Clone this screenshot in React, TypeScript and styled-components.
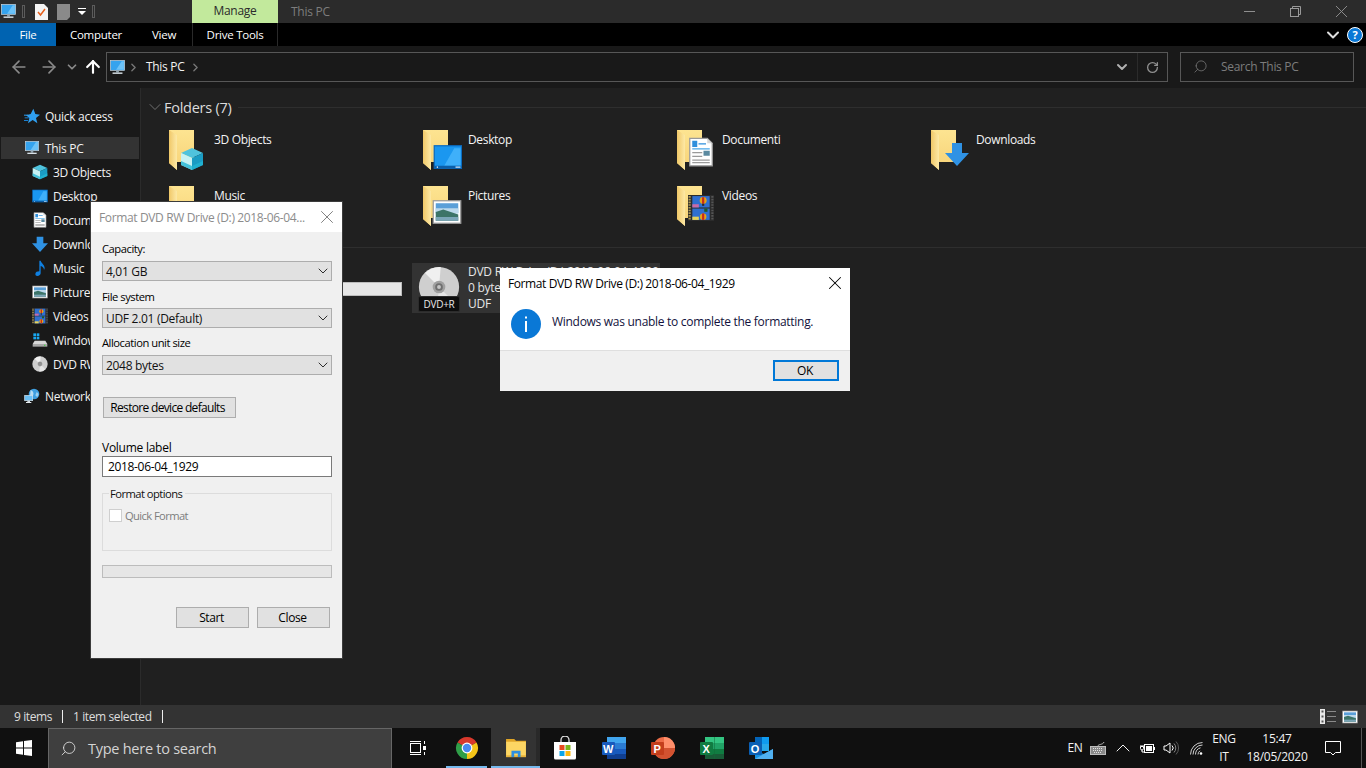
import React from "react";
import styled, { createGlobalStyle } from "styled-components";
import {
  ArrowLeft,
  ArrowRight,
  ArrowUp,
  ChevronDown,
  ChevronRight,
  ChevronUp,
  RotateCw,
  Search,
  X,
} from "lucide-react";

const GlobalStyle = createGlobalStyle`
  html, body {
    margin: 0;
    padding: 0;
    background: #202020;
    font-family: "Open Sans", "Noto Sans", sans-serif;
    font-size: 12px;
    letter-spacing: -0.26px;
  }
  * { box-sizing: border-box; }
`;

const Page = styled.div`
  position: relative;
  width: 1366px;
  height: 768px;
  overflow: hidden;
  display: flex;
  flex-direction: column;
  color: #fff;
`;

/* ---------- title bar ---------- */
const TitleBar = styled.div`
  height: 23px;
  background: #2b2b2b;
  display: flex;
  align-items: center;
`;
const QuickTools = styled.div`
  width: 192px;
  display: flex;
  align-items: center;
  height: 100%;
`;
const QuickSep = styled.span`
  width: 3px;
  height: 13px;
  border: 1px solid #5c5c5c;
  margin: 0 ${(p: { $m?: number }) => p.$m ?? 10}px;
`;
const ManageTab = styled.div`
  width: 86px;
  height: 100%;
  background: #c2e99c;
  color: #2b2b2b;
  text-align: center;
  line-height: 21px;
`;
const WindowTitle = styled.div`
  margin-left: 13px;
  color: #7d7d7d;
  flex: 1;
`;
const WindowButtons = styled.div`
  display: flex;
  align-items: center;
  height: 100%;
  padding-right: 2px;
`;
const WindowButton = styled.div`
  width: 46px;
  height: 100%;
  display: flex;
  align-items: center;
  justify-content: center;
  color: #8f8f8f;
`;

/* ---------- ribbon ---------- */
const Ribbon = styled.div`
  height: 23px;
  background: #000;
  display: flex;
  align-items: center;
`;
const RibbonTab = styled.div<{ $w: number; $active?: boolean; $ruled?: boolean }>`
  width: ${(p) => p.$w}px;
  height: 100%;
  display: flex;
  align-items: center;
  justify-content: center;
  font-size: 11.5px;
  background: ${(p) => (p.$active ? "#0063b1" : "transparent")};
  border-left: ${(p) => (p.$ruled ? "1px solid #2a2a2a" : "none")};
  border-right: ${(p) => (p.$ruled ? "1px solid #2a2a2a" : "none")};
`;
const RibbonEnd = styled.div`
  margin-left: auto;
  display: flex;
  align-items: center;
  gap: 4px;
  padding-right: 3px;
`;
const HelpBadge = styled.div`
  width: 16px;
  height: 16px;
  border-radius: 50%;
  border: 1px solid #fff;
  background: #0a78d6;
  color: #fff;
  font-weight: 700;
  font-size: 11px;
  line-height: 14px;
  text-align: center;
`;

/* ---------- address row ---------- */
const AddressRow = styled.div`
  height: 42px;
  background: #191919;
  display: flex;
  align-items: center;
`;
const NavButtons = styled.div`
  width: 106px;
  display: flex;
  align-items: center;
  padding-left: 9px;
  color: #8a8a8a;
`;
const NavSlot = styled.span<{ $w: number; $on?: boolean }>`
  width: ${(p) => p.$w}px;
  display: flex;
  justify-content: flex-start;
  color: ${(p) => (p.$on ? "#fff" : "#8a8a8a")};
`;
const AddressBox = styled.div`
  width: 1062px;
  height: 30px;
  border: 1px solid #575757;
  display: flex;
  align-items: center;
  padding-left: 2px;
  color: #f2f2f2;
`;
const Crumb = styled.span`
  margin: 0 4px 0 6px;
  padding-bottom: 2px;
  letter-spacing: -0.3px;
`;
const AddressEnd = styled.div`
  margin-left: auto;
  height: 100%;
  display: flex;
  align-items: center;
  color: #8f8f8f;
`;
const DropSlot = styled.div`
  width: 31px;
  height: 100%;
  display: flex;
  align-items: center;
  justify-content: center;
  border-right: 1px solid #2b2b2b;
  color: #b0b0b0;
`;
const RefreshSlot = styled.div`
  width: 29px;
  display: flex;
  justify-content: center;
`;
const SearchBox = styled.div`
  width: 174px;
  height: 30px;
  margin-left: 12px;
  border: 1px solid #575757;
  display: flex;
  align-items: center;
  padding: 0 0 2px 12px;
  gap: 13px;
  color: #7c7c7c;
  letter-spacing: -0.3px;
`;
const MirroredSearch = styled(Search)`
  transform: scaleX(-1);
`;

/* ---------- body ---------- */
const Body = styled.div`
  height: 617px;
  display: flex;
`;
const Sidebar = styled.nav`
  width: 141px;
  background: #191919;
  border-right: 1px solid #2b2b2b;
  padding-top: 16px;
  display: flex;
  flex-direction: column;
`;
const NavRow = styled.div<{ $child?: boolean; $selected?: boolean; $gap?: number }>`
  height: ${(p) => (p.$selected ? "22px" : "24px")};
  margin-top: ${(p) => p.$gap ?? 0}px;
  margin-bottom: ${(p) => (p.$selected ? "1px" : "0")};
  margin-left: 1px;
  margin-right: 1px;
  padding-left: ${(p) => (p.$child ? "31px" : "23px")};
  display: flex;
  align-items: center;
  gap: 5px;
  background: ${(p) => (p.$selected ? "#333" : "transparent")};
  color: #f2f2f2;
  white-space: nowrap;
  letter-spacing: -0.3px;
`;

const Main = styled.main`
  flex: 1;
  background: #202020;
  padding: 9px 0 0 4px;
`;
const SectionHead = styled.div<{ $top?: number }>`
  height: 20px;
  margin-top: ${(p) => p.$top ?? 0}px;
  display: flex;
  align-items: center;
  color: #cfcfcf;
  white-space: nowrap;
`;
const SectionTitle = styled.span`
  font-size: 14.5px;
  margin-left: -1px;
  color: #dcdcdc;
`;
const SectionRule = styled.span`
  flex: 1;
  height: 1px;
  margin-left: 7px;
  background: #2e2e2e;
`;
const TileGrid = styled.div<{ $top: number }>`
  display: grid;
  grid-template-columns: repeat(4, 248px);
  column-gap: 6px;
  row-gap: 8px;
  margin: ${(p) => p.$top}px 0 0 13px;
`;
const FolderTile = styled.div`
  height: 48px;
  display: flex;
  padding-left: 11px;
`;
const FolderLabel = styled.div`
  margin: 3px 0 0 6px;
  color: #f4f4f4;
  line-height: 16px;
  letter-spacing: -0.34px;
`;
const DriveTile = styled.div<{ $selected?: boolean }>`
  height: 50px;
  display: flex;
  padding-left: 6px;
  background: ${(p) => (p.$selected ? "#333" : "transparent")};
`;
const DriveText = styled.div`
  margin-left: 6px;
  width: 188px;
  line-height: 16px;
  padding-top: 1px;
  color: #e6e6e6;
  white-space: nowrap;
`;
const DriveBar = styled.div`
  height: 14px;
  margin: 2px 0;
  background: #e6e6e6;
  border: 1px solid #bcbcbc;
`;

/* ---------- status bar ---------- */
const StatusBar = styled.div`
  height: 23px;
  background: #333;
  display: flex;
  align-items: center;
  padding-left: 14px;
  color: #dedede;
  letter-spacing: -0.4px;
`;
const StatusSep = styled.span`
  width: 1px;
  height: 13px;
  background: #eee;
  margin: 0 10px;
`;
const ViewIcons = styled.div`
  margin-left: auto;
  display: flex;
  gap: 6px;
  padding-right: 8px;
`;

/* ---------- taskbar ---------- */
const Taskbar = styled.div`
  height: 40px;
  background: #101010;
  display: flex;
  align-items: center;
`;
const StartSlot = styled.div`
  width: 48px;
  display: flex;
  justify-content: center;
`;
const TaskSearch = styled.div`
  width: 344px;
  height: 40px;
  background: #3f3f3f;
  border: 1px solid #666;
  border-bottom: none;
  display: flex;
  align-items: center;
  padding-left: 11px;
  gap: 11px;
  color: #d4d4d4;
  font-size: 14.5px;
`;
const TaskIcon = styled.div<{ $w?: number; $open?: boolean; $active?: boolean }>`
  position: relative;
  width: ${(p) => p.$w ?? 49}px;
  height: 40px;
  display: flex;
  align-items: center;
  justify-content: center;
  background: ${(p) => (p.$active ? "#333" : "transparent")};
  border-right: ${(p) => (p.$active ? "4px solid #292929" : "none")};
  padding-left: ${(p) => (p.$active ? "4px" : "0")};
  &::after {
    content: "";
    display: ${(p) => (p.$open ? "block" : "none")};
    position: absolute;
    bottom: 0;
    left: ${(p) => (p.$active ? 0 : "4px")};
    right: ${(p) => (p.$active ? "-4px" : "4px")};
    height: 2px;
    background: #76b9ed;
  }
`;
const Tray = styled.div`
  margin-left: auto;
  display: flex;
  align-items: center;
  height: 100%;
`;
const TraySlot = styled.div<{ $w: number }>`
  width: ${(p) => p.$w}px;
  display: flex;
  flex-direction: column;
  align-items: center;
  justify-content: center;
  line-height: 18px;
  white-space: nowrap;
  color: #f2f2f2;
`;
const ShowDesktop = styled.div`
  width: 11px;
  height: 100%;
  padding-left: 6px;
  &::before {
    content: "";
    display: block;
    width: 1px;
    height: 100%;
    background: #555;
  }
`;

/* ---------- dialogs ---------- */
const FormatWindow = styled.section`
  position: absolute;
  left: 90px;
  top: 201px;
  width: 253px;
  height: 458px;
  background: #f0f0f0;
  border: 1px solid #3c3c3c;
  color: #000;
`;
const FormatTitle = styled.header`
  height: 30px;
  background: #fff;
  display: flex;
  align-items: center;
  justify-content: space-between;
  padding: 0 4px 0 8px;
  color: #8c8c8c;
  white-space: nowrap;
  letter-spacing: -0.36px;
`;
const FormatBody = styled.div`
  padding-left: 11px;
  width: 241px;
`;
const FieldLabel = styled.div<{ $top: number; $small?: boolean }>`
  height: 16px;
  line-height: 18px;
  margin-top: ${(p) => p.$top}px;
  font-size: ${(p) => (p.$small ? "11.2px" : "12px")};
  letter-spacing: ${(p) => (p.$small ? "-0.46px" : "-0.26px")};
`;
const Combo = styled.div<{ $top: number }>`
  height: 20px;
  margin-top: ${(p) => p.$top}px;
  background: #e1e1e1;
  border: 1px solid #adadad;
  display: flex;
  align-items: center;
  justify-content: space-between;
  padding-left: 3px;
  color: #111;
  letter-spacing: -0.3px;
`;
const PlainButton = styled.div<{ $w: number; $h?: number }>`
  width: ${(p) => p.$w}px;
  height: ${(p) => p.$h ?? 21}px;
  background: #e1e1e1;
  border: 1px solid #adadad;
  display: flex;
  align-items: center;
  justify-content: center;
  letter-spacing: -0.4px;
  padding-right: 2px;
`;
const RestoreButton = styled(PlainButton)`
  margin: 22px 0 0 1px;
  letter-spacing: -0.68px;
  padding-right: 4px;
`;
const VolumeInput = styled.div`
  height: 21px;
  margin-top: 1px;
  background: #fff;
  border: 1px solid #7a7a7a;
  display: flex;
  align-items: center;
  padding-left: 5px;
  letter-spacing: -0.34px;
`;
const OptionsGroup = styled.fieldset`
  margin: 8px 0 0;
  padding: 0 0 0 6px;
  height: 66px;
  border: 1px solid #dcdcdc;
`;
const OptionsLegend = styled.legend`
  padding: 0 3px 0 1px;
  margin-left: 0;
  line-height: 18px;
  height: 16px;
  color: #111;
  font-size: 11.2px;
  letter-spacing: -0.54px;
`;
const CheckRow = styled.div`
  margin-top: 7px;
  display: flex;
  align-items: center;
  gap: 3px;
  color: #7d7d7d;
  font-size: 11.2px;
  letter-spacing: -0.6px;
`;
const CheckBox = styled.span`
  width: 13px;
  height: 13px;
  background: #fff;
  border: 1px solid #cfcfcf;
`;
const Progress = styled.div`
  height: 13px;
  margin-top: 14px;
  background: #e6e6e6;
  border: 1px solid #bcbcbc;
`;
const FormatActions = styled.div`
  margin-top: 29px;
  padding-right: 2px;
  display: flex;
  justify-content: flex-end;
  gap: 8px;
`;
const AlertWindow = styled.section`
  position: absolute;
  left: 500px;
  top: 268px;
  width: 350px;
  height: 123px;
  background: #fff;
  color: #000;
  display: flex;
  flex-direction: column;
`;
const AlertTitle = styled.header`
  height: 30px;
  display: flex;
  align-items: center;
  justify-content: space-between;
  padding: 0 4px 0 8px;
  letter-spacing: -0.4px;
`;
const AlertBody = styled.div`
  flex: 1;
  display: flex;
  gap: 11px;
  padding: 11px 0 0 11px;
`;
const AlertText = styled.div`
  margin-top: 4px;
  color: #12123c;
  letter-spacing: -0.29px;
`;
const AlertFooter = styled.footer`
  height: 41px;
  background: #f0f0f0;
  border-top: 1px solid #dfdfdf;
  display: flex;
  justify-content: flex-end;
  padding: 9px 11px 0 0;
`;
const DefaultButton = styled(PlainButton)`
  border: 2px solid #0078d7;
`;

/* ---------- drawings, all in a 24x24 box ---------- */
const CubeArt = () => (
  <>
    <polygon points="12,1 23,6 12,11 1,6" fill="#4fc3dd" />
    <polygon points="1,6 12,11 12,23 1,18" fill="#c6f2f4" />
    <polygon points="23,6 12,11 12,23 23,18" fill="#1a9cc4" />
    <polygon points="1,14 12,19 23,14 23,18 12,23 1,18" fill="#22b5d3" opacity="0.8" />
  </>
);
const DesktopArt = () => (
  <>
    <rect x="1" y="3" width="22" height="18" fill="#1a97f0" stroke="#0b6cc0" />
    <polygon points="9,19 17,5 22,5 22,19" fill="#3fb0fa" />
    <rect x="1" y="19" width="22" height="2" fill="#0b5ea8" />
    <rect x="3" y="19.6" width="1" height="1" fill="#fff" />
    <rect x="18" y="19.6" width="4" height="1" fill="#cfe9ff" />
  </>
);
const DocArt = () => (
  <>
    <polygon points="3,1 17,1 21,5 21,23 3,23" fill="#fff" stroke="#9a9a9a" />
    <polygon points="17,1 21,5 17,5" fill="#d6d6d6" />
    <rect x="5" y="3" width="4" height="5" fill="#2f8fdc" />
    <rect x="10" y="5" width="6" height="1" fill="#2f8fdc" />
    <rect x="5" y="9" width="14" height="1" fill="#49a7e8" />
    <rect x="5" y="12" width="8" height="1" fill="#9a9a9a" />
    <rect x="14" y="11" width="5" height="4" fill="#5b8aa0" />
    <rect x="5" y="15" width="8" height="1" fill="#9a9a9a" />
    <rect x="5" y="18" width="14" height="1" fill="#9a9a9a" />
    <rect x="5" y="20" width="14" height="1" fill="#9a9a9a" />
  </>
);
const ArrowArt = () => (
  <polygon points="7,1 17,1 17,11 24,11 12,24 0,11 7,11" fill="#2f92e4" />
);
const NoteArt = () => (
  <path
    d="M11 1h2c1 4 6 6 6 11 0 1-.5 2-1 3 0-3-2-5-5-6v11c0 2-2 4-5 4-2 0-3-1-3-3 0-3 3-4 6-4z"
    fill="#0f7fe0"
  />
);
const PictureArt = () => (
  <>
    <rect x="1" y="3" width="22" height="18" fill="#fff" stroke="#9a9a9a" />
    <rect x="3" y="5" width="18" height="8" fill="#5a9fd8" />
    <rect x="3" y="9" width="18" height="4" fill="#bcd9ec" />
    <polygon points="3,12 9,10 15,12 21,14 21,19 3,19" fill="#3c7468" />
    <rect x="3" y="16" width="18" height="3" fill="#7ba6b8" />
  </>
);
const FilmArt = () => (
  <>
    <rect x="0" y="0" width="24" height="24" fill="#2b2b2b" />
    <path d="M1.500 1v22" stroke="#b09a55" strokeWidth="2" strokeDasharray="1.500 1" />
    <path d="M22.500 1v22" stroke="#555" strokeWidth="2" strokeDasharray="1.500 1" />
    <rect x="4" y="1" width="16" height="10.500" fill="#2f6fd0" />
    <rect x="4" y="12.500" width="16" height="10.500" fill="#2f6fd0" />
    <circle cx="14" cy="5" r="3.200" fill="#e6a316" />
    <rect x="13" y="2" width="2" height="6" fill="#c8281e" />
    <rect x="13" y="8" width="2" height="2" fill="#2a2a2a" />
    <circle cx="14" cy="20" r="3" fill="#e6a316" />
    <rect x="13" y="17" width="2" height="6" fill="#c8281e" />
    <rect x="15" y="12.500" width="3" height="3" fill="#1f5a24" />
    <rect x="4" y="8.500" width="6" height="3" fill="#c86aa8" />
    <rect x="4" y="20" width="6" height="3" fill="#e6d25a" />
  </>
);
const PcArt = () => (
  <>
    <rect x="2" y="2" width="20" height="14" fill="#35a3ee" stroke="#c9d4dc" />
    <polygon points="10,15 18,3 21,3 21,15" fill="#6cc2f7" />
    <rect x="10" y="16" width="4" height="3" fill="#8fa3b0" />
    <rect x="5" y="19" width="14" height="2" fill="#d9e2e8" />
  </>
);
const DriveArt = () => (
  <>
    <polygon points="4,13 20,13 23,18 1,18" fill="#d6d6d6" />
    <rect x="1" y="18" width="22" height="4" fill="#a8a8a8" />
    <rect x="18" y="19" width="2" height="2" fill="#4ccf4c" />
    <rect x="2" y="2" width="4" height="4" fill="#18a8f0" />
    <rect x="7" y="2" width="4" height="4" fill="#18a8f0" />
    <rect x="2" y="7" width="4" height="4" fill="#18a8f0" />
    <rect x="7" y="7" width="4" height="4" fill="#18a8f0" />
  </>
);
const DiscArt = () => (
  <>
    <circle cx="12" cy="12" r="11.500" fill="#cfcfcf" />
    <path d="M12 12 4 4a11.500 11.500 0 0 1 9-3.400z" fill="#f0f0f0" />
    <path d="M12 12l8 8a11.500 11.500 0 0 1-9 3.400z" fill="#e6e6e6" />
    <circle cx="12" cy="12" r="3.600" fill="#a0a0a0" />
    <circle cx="12" cy="12" r="2.200" fill="#6f6f6f" />
    <circle cx="12" cy="12" r="1.100" fill="#c6c6c6" />
  </>
);
const NetworkArt = () => (
  <>
    <circle cx="15" cy="9" r="8" fill="#3f9fe0" />
    <path d="M10 3c3 1 5 4 4 7s-3 3-5 2z" fill="#b8dcf2" />
    <path d="M19 6l3 3-2 5-3-3z" fill="#9ed0ee" />
    <rect x="1" y="11" width="12" height="8" fill="#6cc0f5" stroke="#d6e2ea" />
    <rect x="5" y="19" width="4" height="2" fill="#cfd8de" />
    <rect x="3" y="21" width="8" height="1.5" fill="#e8edf0" />
  </>
);
const StarArt = () => (
  <>
    <polygon points="14,1 17,9 24,10 18,15 20,23 13,18 6,23 8,15 3,11 10,9" fill="#2f9ff0" />
    <rect x="0" y="10" width="6" height="1.5" fill="#2f9ff0" />
    <rect x="1" y="14" width="6" height="1.5" fill="#1a7fd0" />
    <rect x="0" y="18" width="6" height="1.5" fill="#1a7fd0" />
  </>
);

const Art = ({ size, children }: { size: number; children: React.ReactNode }) => (
  <svg width={size} height={size} viewBox="0 0 24 24" style={{ flex: "none" }}>
    {children}
  </svg>
);

const FolderIcon = ({ children, box = 24, dx = 11, dy = 18 }: { children: React.ReactNode; box?: number; dx?: number; dy?: number }) => (
  <svg width="39" height="44" viewBox="0 0 39 44" style={{ flex: "none" }}>
    <defs>
      <linearGradient id="flap" x1="0" x2="1" y1="0" y2="0">
        <stop offset="0" stopColor="#f0c868" />
        <stop offset="1" stopColor="#fde9a6" />
      </linearGradient>
      <linearGradient id="back" x1="0" x2="0" y1="0" y2="1">
        <stop offset="0" stopColor="#fde491" />
        <stop offset="1" stopColor="#f7d277" />
      </linearGradient>
    </defs>
    <polygon points="0,1 25,1 25,33 8,33 8,41 0,34" fill="url(#back)" />
    <polygon points="0,1 8,6 8,41 0,34" fill="url(#flap)" />
    <svg x={dx} y={dy} width={box} height={box} viewBox="0 0 24 24">
      {children}
    </svg>
  </svg>
);

const WinLogo = () => (
  <svg width="16" height="16" viewBox="0 0 16 16">
    <polygon points="0,2.2 7,1.2 7,7.5 0,7.5" fill="#fff" />
    <polygon points="8,1 16,0 16,7.5 8,7.5" fill="#fff" />
    <polygon points="0,8.5 7,8.5 7,14.8 0,13.8" fill="#fff" />
    <polygon points="8,8.5 16,8.5 16,16 8,15" fill="#fff" />
  </svg>
);
const TaskViewIcon = () => (
  <svg width="17" height="16" viewBox="0 0 17 16" fill="none" stroke="#fff">
    <rect x="1.5" y="3.5" width="10" height="9" />
    <path d="M1 1.500h11M1 14.500h11M15.500 1v3M15.500 12v3" />
    <rect x="14" y="6" width="3" height="4" fill="#fff" stroke="none" />
  </svg>
);
const ChromeIcon = () => (
  <svg width="24" height="24" viewBox="0 0 24 24">
    <path d="M12 12 2.47 6.5A11 11 0 0 1 21.53 6.5Z" fill="#d8382c" />
    <path d="M12 12 21.53 6.5A11 11 0 0 1 12 23Z" fill="#f5c518" />
    <path d="M12 12 12 23A11 11 0 0 1 2.47 6.5Z" fill="#2f9e48" />
    <circle cx="12" cy="12" r="5.4" fill="#fff" />
    <circle cx="12" cy="12" r="4.2" fill="#4a8af0" />
  </svg>
);
const ExplorerIcon = () => (
  <svg width="22" height="19" viewBox="0 0 24 21">
    <path d="M1 0h9l2 2h11v2H1z" fill="#e0a526" />
    <rect x="1" y="3" width="22" height="17" fill="#fdd663" />
    <rect x="1" y="18" width="22" height="2" fill="#e6b23a" />
    <path d="M7 20v-7h10v7h-3v-4h-4v4z" fill="#2f8fe0" />
  </svg>
);
const StoreIcon = () => (
  <svg width="24" height="24" viewBox="0 0 24 24">
    <path d="M8 7V4a4 4 0 0 1 8 0v3" fill="none" stroke="#ddd" strokeWidth="1.3" />
    <path d="M1 6h22v16a1.5 1.5 0 0 1-1.5 1.5h-19A1.5 1.5 0 0 1 1 22z" fill="#fff" />
    <rect x="6.5" y="9" width="5" height="5" fill="#e8491d" />
    <rect x="12.5" y="9" width="5" height="5" fill="#7cb518" />
    <rect x="6.5" y="15" width="5" height="5" fill="#0aa4e8" />
    <rect x="12.5" y="15" width="5" height="5" fill="#fbb80f" />
  </svg>
);
const OfficeLetter = ({ letter, fill, x = 6 }: { letter: string; fill: string; x?: number }) => (
  <>
    <rect x="0" y="6" width="13" height="13" rx="1" fill={fill} />
    <text x={x} y="16.5" textAnchor="middle" fontFamily="Liberation Sans" fontWeight="700" fontSize="11" fill="#fff">
      {letter}
    </text>
  </>
);
const WordIcon = () => (
  <svg width="24" height="24" viewBox="0 0 24 24">
    <rect x="5" y="1" width="19" height="6" fill="#41a5ee" />
    <rect x="5" y="7" width="19" height="6" fill="#2b7cd3" />
    <rect x="5" y="13" width="19" height="5" fill="#185abd" />
    <rect x="5" y="18" width="19" height="5" fill="#103f91" />
    <OfficeLetter letter="W" fill="#185abd" />
  </svg>
);
const PowerPointIcon = () => (
  <svg width="24" height="24" viewBox="0 0 24 24">
    <circle cx="13" cy="12" r="11" fill="#ed6c47" />
    <path d="M13 1a11 11 0 0 1 11 11H13z" fill="#ff8f6b" />
    <path d="M2 12a11 11 0 0 0 22 0z" fill="#d35230" />
    <OfficeLetter letter="P" fill="#c43e1c" />
  </svg>
);
const ExcelIcon = () => (
  <svg width="24" height="24" viewBox="0 0 24 24">
    <rect x="5" y="1" width="19" height="6" fill="#33c481" />
    <rect x="5" y="7" width="19" height="6" fill="#21a366" />
    <rect x="5" y="13" width="19" height="5" fill="#107c41" />
    <rect x="5" y="18" width="19" height="5" fill="#185c37" />
    <rect x="14" y="1" width="1" height="22" fill="#0f6b38" opacity="0.5" />
    <OfficeLetter letter="X" fill="#107c41" />
  </svg>
);
const OutlookIcon = () => (
  <svg width="24" height="24" viewBox="0 0 24 24">
    <rect x="6" y="1" width="7" height="7" fill="#0364b8" />
    <rect x="13" y="1" width="7" height="7" fill="#0f9bf0" />
    <rect x="6" y="8" width="7" height="7" fill="#0f78d4" />
    <rect x="13" y="8" width="7" height="7" fill="#28a8ea" />
    <path d="M6 15l9 3 9-5v10H6z" fill="#1490df" />
    <path d="M6 23l18-10v10z" fill="#50b0f0" />
    <OfficeLetter letter="O" fill="#0a5fb4" />
  </svg>
);

const Keyboard = () => (
  <svg width="16" height="14" viewBox="0 0 16 14" fill="none" stroke="#bdbdbd">
    <rect x="0.5" y="5.5" width="15" height="8" fill="#8a8a8a" />
    <path d="M3 7.5h10M3 9.5h10M4 11.5h8" stroke="#e2e2e2" strokeDasharray="1 1" />
    <path d="M8 5c0-2 5-1 6-4" />
  </svg>
);
const Battery = () => (
  <svg width="16" height="12" viewBox="0 0 16 12" fill="none" stroke="#fff">
    <rect x="5.5" y="2.5" width="9" height="8" />
    <rect x="7" y="4" width="6" height="5" fill="#fff" stroke="none" />
    <rect x="15" y="5" width="1" height="3" fill="#fff" stroke="none" />
    <path d="M1.5 4.5h3v2a1.5 1.5 0 0 1-3 0zM2 3v1.5M4 3v1.5M3 8v2h2" />
  </svg>
);
const Volume = () => (
  <svg width="17" height="16" viewBox="0 0 17 16" fill="none" stroke="#fff">
    <path d="M1 6h2l4-3v10l-4-3H1z" />
    <path d="M9 5.5a3.5 3.5 0 0 1 0 5" />
    <path d="M11 3.5a6.5 6.5 0 0 1 0 9" stroke="#8a8a8a" />
    <path d="M13 1.5a9.5 9.5 0 0 1 0 13" stroke="#5a5a5a" />
  </svg>
);
const Wifi = () => (
  <svg width="13" height="13" viewBox="0 0 13 13" fill="none" stroke="#cfcfcf">
    <path d="M.5 12.5a12 12 0 0 1 12-12" />
    <path d="M3 12.5a9.5 9.5 0 0 1 9.5-9.5" />
    <path d="M5.5 12.5a7 7 0 0 1 5-6.7" />
    <path d="M8 12.5a4.500 4.500 0 0 1 2-3.700" />
    <circle cx="11" cy="11.500" r="1.300" fill="#fff" stroke="none" />
  </svg>
);
const Notice = () => (
  <svg width="16" height="16" viewBox="0 0 16 16" fill="none" stroke="#fff">
    <path d="M.5 1.500h15v11h-5L8 15l-2.500-2.500h-5z" />
  </svg>
);
const RestoreGlyph = () => (
  <svg width="11" height="11" viewBox="0 0 11 11" fill="none" stroke="#9a9a9a">
    <rect x="0.5" y="2.500" width="8" height="8" />
    <path d="M2.500 2.500v-2h8v8h-2" />
  </svg>
);
const ListViewGlyph = () => (
  <svg width="16" height="15" viewBox="0 0 16 15">
    <rect x="0" y="0" width="5" height="15" fill="#e8e8e8" />
    <rect x="1.500" y="1.500" width="2" height="2" fill="#555" />
    <rect x="1.500" y="6.500" width="2" height="2" fill="#555" />
    <rect x="1.500" y="11.500" width="2" height="2" fill="#555" />
    <rect x="7" y="2" width="9" height="1" fill="#8a8a8a" />
    <rect x="7" y="7" width="9" height="1" fill="#8a8a8a" />
    <rect x="7" y="12" width="9" height="1" fill="#8a8a8a" />
  </svg>
);
const InfoMark = () => (
  <svg width="30" height="30" viewBox="0 0 30 30" style={{ flex: "none" }}>
    <circle cx="15" cy="15" r="15" fill="#0a78d6" />
    <rect x="14" y="12" width="2" height="11" fill="#fff" />
    <rect x="14" y="7.500" width="2" height="2" fill="#fff" />
  </svg>
);

const DvdIcon = styled.div`
  position: relative;
  width: 44px;
  height: 44px;
  margin-top: 3px;
`;
const DvdBadge = styled.span`
  position: absolute;
  left: 0;
  bottom: -2px;
  width: 42px;
  height: 16px;
  background: #0e0e0e;
  border: 1px solid #2c2c2c;
  border-radius: 2px;
  color: #e8e8e8;
  font-size: 10px;
  line-height: 14px;
  text-align: center;
`;

const folders: { name: string; art: React.ReactNode; box?: number; dx?: number; dy?: number }[] = [
  { name: "3D Objects", art: <CubeArt /> },
  { name: "Desktop", art: <DesktopArt />, box: 30, dx: 10, dy: 13 },
  { name: "Documenti", art: <DocArt />, box: 30, dx: 9, dy: 8 },
  { name: "Downloads", art: <ArrowArt />, dx: 14, dy: 13 },
  { name: "Music", art: <NoteArt /> },
  { name: "Pictures", art: <PictureArt />, box: 30, dx: 9, dy: 12 },
  { name: "Videos", art: <FilmArt />, box: 26, dx: 11, dy: 10 },
];

const sideItems: { name: string; art: React.ReactNode }[] = [
  { name: "3D Objects", art: <CubeArt /> },
  { name: "Desktop", art: <DesktopArt /> },
  { name: "Documenti", art: <DocArt /> },
  { name: "Downloads", art: <ArrowArt /> },
  { name: "Music", art: <NoteArt /> },
  { name: "Pictures", art: <PictureArt /> },
  { name: "Videos", art: <FilmArt /> },
  { name: "Windows (C:)", art: <DriveArt /> },
  { name: "DVD RW Drive (D:)", art: <DiscArt /> },
];

export default function App() {
  return (
    <Page>
      <GlobalStyle />
      <TitleBar>
        <QuickTools>
          <Art size={17}>
            <PcArt />
          </Art>
          <QuickSep $m={5} />
          <svg width="13" height="16" viewBox="0 0 13 16" style={{ marginLeft: 5 }}>
            <polygon points="0,0 9,0 13,4 13,16 0,16" fill="#f4f4f4" />
            <path d="M3 8l2.500 3L10 5" fill="none" stroke="#e8601c" strokeWidth="1.500" />
          </svg>
          <svg width="13" height="16" viewBox="0 0 13 16" style={{ marginLeft: 9 }}>
            <polygon points="0,0 13,0 13,13 10,16 0,16" fill="#8a8a8a" />
          </svg>
          <svg width="8" height="8" viewBox="0 0 8 8" style={{ marginLeft: 8 }}>
            <rect y="0" width="8" height="1" fill="#fff" />
            <polygon points="0,3 8,3 4,7" fill="#fff" />
          </svg>
          <QuickSep $m={6} />
        </QuickTools>
        <ManageTab>Manage</ManageTab>
        <WindowTitle>This PC</WindowTitle>
        <WindowButtons>
          <WindowButton>
            <svg width="11" height="1"><rect width="11" height="1" fill="#8f8f8f" /></svg>
          </WindowButton>
          <WindowButton>
            <RestoreGlyph />
          </WindowButton>
          <WindowButton>
            <X size={21} strokeWidth={1.1} />
          </WindowButton>
        </WindowButtons>
      </TitleBar>

      <Ribbon>
        <RibbonTab $w={56} $active>File</RibbonTab>
        <RibbonTab $w={80}>Computer</RibbonTab>
        <RibbonTab $w={56}>View</RibbonTab>
        <RibbonTab $w={86} $ruled>Drive Tools</RibbonTab>
        <RibbonEnd>
          <ChevronDown size={20} strokeWidth={2.4} color="#ddd" />
          <HelpBadge>?</HelpBadge>
        </RibbonEnd>
      </Ribbon>

      <AddressRow>
        <NavButtons>
          <NavSlot $w={30}><ArrowLeft size={20} strokeWidth={2} /></NavSlot>
          <NavSlot $w={26}><ArrowRight size={20} strokeWidth={2} /></NavSlot>
          <NavSlot $w={18}><ChevronDown size={14} strokeWidth={3} /></NavSlot>
          <NavSlot $w={20} $on><ArrowUp size={20} strokeWidth={2.6} /></NavSlot>
        </NavButtons>
        <AddressBox>
          <Art size={17}>
            <PcArt />
          </Art>
          <ChevronRight size={13} strokeWidth={2.5} color="#777" style={{ marginLeft: 1 }} />
          <Crumb>This PC</Crumb>
          <ChevronRight size={13} strokeWidth={2.5} color="#777" />
          <AddressEnd>
            <DropSlot><ChevronDown size={16} strokeWidth={3} /></DropSlot>
            <RefreshSlot><RotateCw size={13} strokeWidth={2.4} /></RefreshSlot>
          </AddressEnd>
        </AddressBox>
        <SearchBox>
          <MirroredSearch size={15} strokeWidth={1.2} />
          Search This PC
        </SearchBox>
      </AddressRow>

      <Body>
        <Sidebar>
          <NavRow>
            <Art size={16}><StarArt /></Art>
            Quick access
          </NavRow>
          <NavRow $gap={9} $selected>
            <Art size={16}><PcArt /></Art>
            This PC
          </NavRow>
          {sideItems.map((item) => (
            <NavRow $child key={item.name}>
              <Art size={16}>{item.art}</Art>
              {item.name}
            </NavRow>
          ))}
          <NavRow $gap={8}>
            <Art size={16}><NetworkArt /></Art>
            Network
          </NavRow>
        </Sidebar>

        <Main>
          <SectionHead>
            <ChevronDown size={20} strokeWidth={0.9} color="#8a8a8a" />
            <SectionTitle>Folders (7)</SectionTitle>
            <SectionRule />
          </SectionHead>
          <TileGrid $top={12}>
            {folders.map((f) => (
              <FolderTile key={f.name}>
                <FolderIcon box={f.box} dx={f.dx} dy={f.dy}>{f.art}</FolderIcon>
                <FolderLabel>{f.name}</FolderLabel>
              </FolderTile>
            ))}
          </TileGrid>
          <SectionHead $top={4}>
            <ChevronDown size={20} strokeWidth={0.9} color="#8a8a8a" />
            <SectionTitle>Devices and drives (2)</SectionTitle>
            <SectionRule />
          </SectionHead>
          <TileGrid $top={6}>
            <DriveTile>
              <DvdIcon><Art size={42}><DriveArt /></Art></DvdIcon>
              <DriveText>
                Windows (C:)
                <DriveBar />
                18,2 GB free of 237 GB
              </DriveText>
            </DriveTile>
            <DriveTile $selected>
              <DvdIcon>
                <Art size={42}><DiscArt /></Art>
                <DvdBadge>DVD+R</DvdBadge>
              </DvdIcon>
              <DriveText>
                DVD RW Drive (D:) 2018-06-04_1929
                <br />
                0 bytes free of 4,01 GB
                <br />
                UDF
              </DriveText>
            </DriveTile>
          </TileGrid>
        </Main>
      </Body>

      <StatusBar>
        9 items
        <StatusSep />
        1 item selected
        <StatusSep />
        <ViewIcons>
          <ListViewGlyph />
          <Art size={16}><PictureArt /></Art>
        </ViewIcons>
      </StatusBar>

      <Taskbar>
        <StartSlot><WinLogo /></StartSlot>
        <TaskSearch>
          <MirroredSearch size={17} strokeWidth={1.2} color="#e0e0e0" />
          Type here to search
        </TaskSearch>
        <TaskIcon $w={50}><TaskViewIcon /></TaskIcon>
        <TaskIcon $open><ChromeIcon /></TaskIcon>
        <TaskIcon $open $active><ExplorerIcon /></TaskIcon>
        <TaskIcon><StoreIcon /></TaskIcon>
        <TaskIcon><WordIcon /></TaskIcon>
        <TaskIcon><PowerPointIcon /></TaskIcon>
        <TaskIcon><ExcelIcon /></TaskIcon>
        <TaskIcon><OutlookIcon /></TaskIcon>
        <Tray>
          <TraySlot $w={30}>EN</TraySlot>
          <TraySlot $w={16}><Keyboard /></TraySlot>
          <TraySlot $w={33}><ChevronUp size={24} strokeWidth={1} /></TraySlot>
          <TraySlot $w={16}><Battery /></TraySlot>
          <TraySlot $w={32}><Volume /></TraySlot>
          <TraySlot $w={18}><Wifi /></TraySlot>
          <TraySlot $w={38}><span>ENG</span><span>IT</span></TraySlot>
          <TraySlot $w={68}><span>15:47</span><span>18/05/2020</span></TraySlot>
          <TraySlot $w={44}><Notice /></TraySlot>
          <ShowDesktop />
        </Tray>
      </Taskbar>

      <FormatWindow>
        <FormatTitle>
          Format DVD RW Drive (D:) 2018-06-04...
          <X size={22} strokeWidth={1} color="#777" />
        </FormatTitle>
        <FormatBody>
          <FieldLabel $top={8} $small>Capacity:</FieldLabel>
          <Combo $top={5}>4,01 GB<ChevronDown size={16} strokeWidth={1.3} /></Combo>
          <FieldLabel $top={7} $small>File system</FieldLabel>
          <Combo $top={4}>UDF 2.01 (Default)<ChevronDown size={16} strokeWidth={1.3} /></Combo>
          <FieldLabel $top={6} $small>Allocation unit size</FieldLabel>
          <Combo $top={5}>2048 bytes<ChevronDown size={16} strokeWidth={1.3} /></Combo>
          <RestoreButton $w={133}>Restore device defaults</RestoreButton>
          <FieldLabel $top={21}>Volume label</FieldLabel>
          <VolumeInput>2018-06-04_1929</VolumeInput>
          <OptionsGroup>
            <OptionsLegend>Format options</OptionsLegend>
            <CheckRow>
              <CheckBox />
              Quick Format
            </CheckRow>
          </OptionsGroup>
          <Progress />
          <FormatActions>
            <PlainButton $w={73}>Start</PlainButton>
            <PlainButton $w={73}>Close</PlainButton>
          </FormatActions>
        </FormatBody>
      </FormatWindow>

      <AlertWindow>
        <AlertTitle>
          Format DVD RW Drive (D:) 2018-06-04_1929
          <X size={22} strokeWidth={1.1} color="#000" />
        </AlertTitle>
        <AlertBody>
          <InfoMark />
          <AlertText>Windows was unable to complete the formatting.</AlertText>
        </AlertBody>
        <AlertFooter>
          <DefaultButton $w={66}>OK</DefaultButton>
        </AlertFooter>
      </AlertWindow>
    </Page>
  );
}
